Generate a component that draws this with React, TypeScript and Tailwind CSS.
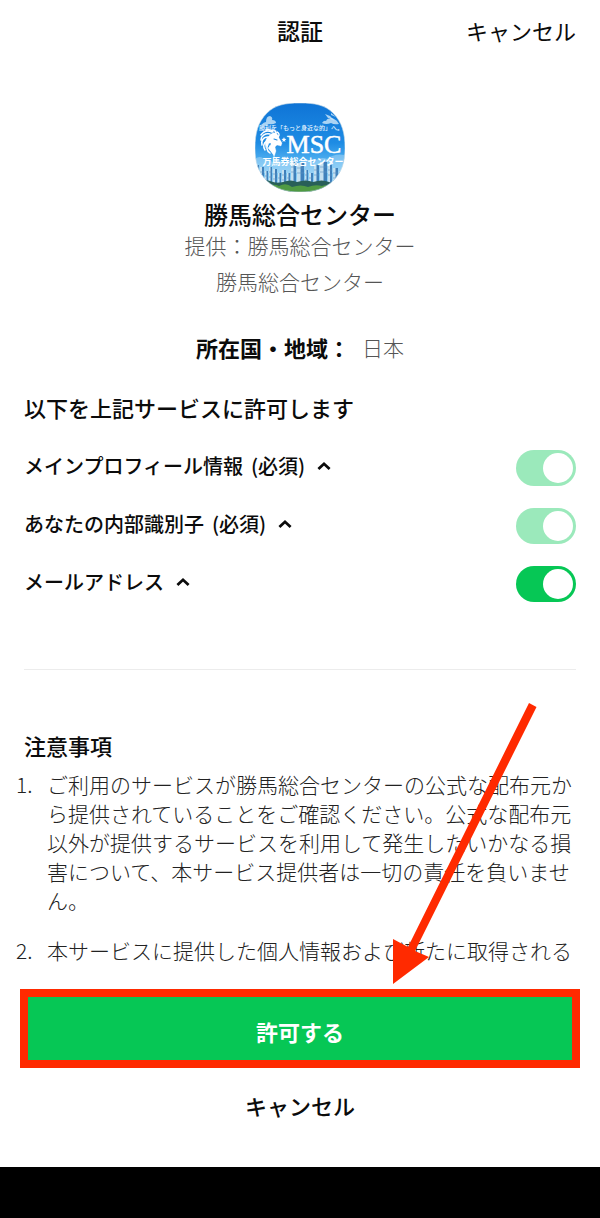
import { useState } from "react";

const logoShape =
  "M45 0C60 0 70 2 78 10C87 19 90 30 90 45C90 59 87 69 78 78C69 86 59 89 45 89C31 89 21 86 12 78C3 69 0 59 0 45C0 30 3 19 12 10C20 2 30 0 45 0Z";

const towers = [
  [1, 62, 3, 22], [5, 64, 4, 20], [10, 68, 3, 14], [14, 64, 3, 20], [18, 66, 4, 16], [23, 70, 3, 12],
  [27, 67, 4, 18], [32, 70, 3, 12], [36, 59, 5, 24], [42, 60, 7, 22], [50, 67, 3, 14], [54, 70, 4, 12],
  [59, 62, 5, 20], [65, 59, 7, 24], [73, 62, 4, 20], [78, 65, 5, 16], [84, 68, 4, 12],
];

function Logo() {
  return (
    <svg viewBox="0 0 90 89" className="h-[89px] w-[90px]" role="img" aria-label="MSC">
      <defs>
        <clipPath id="logo-clip">
          <path d={logoShape} />
        </clipPath>
        <linearGradient id="sky" x1="0" y1="0" x2="0" y2="1">
          <stop offset="0" stopColor="#0f74d6" />
          <stop offset="0.45" stopColor="#1e8ce4" />
          <stop offset="0.7" stopColor="#5bb8f2" />
          <stop offset="1" stopColor="#b5e0f2" />
        </linearGradient>
      </defs>
      <g clipPath="url(#logo-clip)">
        <rect width="90" height="89" fill="url(#sky)" />
        <g fill="#cfe9fa">
          <path d="M6 22q3-3 5-3q0-6 4-6q3 1 2 4q4 0 4 3q-4 2-7 1q-4 3-8 1z" opacity="0.8" />
          <path d="M67 20q2-3 4-2q1-3 4-2q1-2 4 0q3 1 5 5q-5 1-8-1q-5 2-9 0z" opacity="0.8" />
          <path d="M70 11l5 2l5 5l-7-3zM76 10l5 4l-5-2z" opacity="0.8" />
          <path d="M0 56q5-4 9 0q6-2 8 3q7-4 12 1q8-5 14 0q9-6 15-1q8-6 14-3q7-6 18-4v18H0z" opacity="0.4" />
        </g>
        {towers.map(([x, y, w, h]) => (
          <g key={x}>
            <rect x={x} y={y} width={w} height={h} fill="#3f80bb" />
            <rect x={x} y={y} width={w / 2} height={h} fill="#c4e0f0" />
            <path d={`M${x} ${y + 5}h${w}M${x} ${y + 10}h${w}`} stroke="#5a92c2" strokeWidth="0.6" />
          </g>
        ))}
        <path d="M0 78q8-3 15 0t13 1q8-3 14 0q9-3 16 0q9-3 16 0t16-1v15H0z" fill="#285f58" />
        <path d="M10 84q8-4 14-1q7-4 13 1q9-3 16 0q7-3 14-1q5-2 10 0l-8 7H18z" fill="#4f9a43" />
        <g fill="#ffffff" stroke="#ffffff" strokeLinecap="round" strokeLinejoin="round">
          <path d="M15 32c4-4 8-2 9 3l3 5-1 3-4-1-2 2 1 4-2 6c-1-5-4-6-6-9 2-2 3-3 3-5-3 0-4 2-5 5-2-6 0-10 4-13z" strokeWidth="0.3" />
          <path
            d="M17 29c-5-2-9 0-11 3m9-1c-5-1-9 2-9 6m7-3c-5 0-7 4-6 8m5-4c-4 2-4 6-2 9m3-6c-2 4-1 7 2 9m0-7c0 3 1 5 3 7M18 29c-2-2-5-3-7-2m10 4c0-3-2-4-4-4m6 7c2-2 1-4-1-5"
            fill="none"
            strokeWidth="1.5"
          />
          <path d="M19 36l3 1" stroke="#268de0" strokeWidth="1.1" />
          <path d="M29 34l.6 1.8 1.8.2-1.4 1.2.4 1.8-1.4-1-1.6 1 .5-1.8-1.4-1.2 1.8-.2z" stroke="none" />
        </g>
        <text x="46" y="27" textAnchor="middle" fill="#e4f4ff" fontSize="6" fontWeight="500" fontFamily="Noto Sans CJK JP, sans-serif">
          勝利を「もっと身近な的」へ。
        </text>
        <text x="59" y="50" textAnchor="middle" fill="#ffffff" stroke="#ffffff" strokeWidth="0.5" fontSize="26" fontFamily="Liberation Serif, serif">
          MSC
        </text>
        <text x="48" y="62" textAnchor="middle" fill="#ffffff" fontSize="9" fontWeight="700" fontFamily="Noto Sans CJK JP, sans-serif">
          万馬券総合センター
        </text>
      </g>
      <path d={logoShape} fill="none" stroke="#c9dbe6" strokeWidth="0.6" />
    </svg>
  );
}

type Permission = { id: string; name: string; required: boolean };

const permissions: Permission[] = [
  { id: "profile", name: "メインプロフィール情報", required: true },
  { id: "identifier", name: "あなたの内部識別子", required: true },
  { id: "mail", name: "メールアドレス", required: false },
];

const notes = [
  "ご利用のサービスが勝馬総合センターの公式な配布元から提供されていることをご確認ください。公式な配布元以外が提供するサービスを利用して発生したいかなる損害について、本サービス提供者は一切の責任を負いません。",
  "本サービスに提供した個人情報および新たに取得される",
];

function PermissionRow({ id, name, required }: Permission) {
  const [on, setOn] = useState(true);
  const [open, setOpen] = useState(true);
  return (
    <li className="flex h-[58px] items-center justify-between">
      <div className="flex items-center gap-3 pb-1">
        <label htmlFor={id} className="flex gap-2 text-[20px] leading-8 font-medium">
          <span>{name}</span>
          {required && <span>(必須)</span>}
        </label>
        <button type="button" aria-label={`${name}の詳細`} aria-expanded={open} onClick={() => setOpen(!open)}>
          <svg viewBox="0 0 14 10" className="h-2.5 w-3.5" fill="none" stroke="currentColor" strokeWidth="2.8">
            <path d="M1.4 8L7 2.8L12.6 8" />
          </svg>
        </button>
      </div>
      <input
        id={id}
        type="checkbox"
        role="switch"
        checked={on}
        disabled={required}
        onChange={() => setOn(!on)}
        className="flex h-9 w-[60px] shrink-0 appearance-none items-center rounded-full bg-gray-300 p-[3px] before:size-[30px] before:rounded-full before:bg-white checked:justify-end checked:bg-[#06c755] disabled:checked:bg-[#9be9bb]"
      />
    </li>
  );
}

export default function App() {
  return (
    <div className="flex min-h-screen flex-col bg-white font-['Noto_Sans_CJK_JP',sans-serif] text-[#0b0b0b]">
      <header className="grid h-[60px] grid-cols-3 items-center px-6">
        <h1 className="col-start-2 text-center text-[23px] font-medium">認証</h1>
        <button type="button" className="justify-self-end text-[22px]">
          キャンセル
        </button>
      </header>

      <main className="flex grow flex-col">
        <section className="flex flex-col items-center pt-[43px] text-center">
          <Logo />
          <h2 className="mt-[7px] text-[24px] leading-[30px] font-medium">勝馬総合センター</h2>
          <p className="text-[21px] leading-8 font-light text-[#555555]">提供：勝馬総合センター</p>
          <p className="mt-1 text-[21px] leading-8 font-light text-[#555555]">勝馬総合センター</p>
          <dl className="mt-[34px] flex items-center gap-3 leading-8">
            <dt className="text-[22px] font-bold">所在国・地域：</dt>
            <dd className="text-[21px] font-light text-[#555555]">日本</dd>
          </dl>
        </section>

        <section className="mx-6 border-b border-[#ececec] pt-7 pb-14">
          <h2 className="text-[22px] leading-8 font-medium">以下を上記サービスに許可します</h2>
          <ul className="mt-4">
            {permissions.map((permission) => (
              <PermissionRow key={permission.id} {...permission} />
            ))}
          </ul>
        </section>

        <section className="pt-[59px]">
          <h2 className="px-6 text-[22px] leading-8 font-medium">注意事項</h2>
          <ol className="mt-[9px] space-y-[21px] pr-6 pl-4 text-[21px] leading-[29px] font-light text-[#222222]">
            {notes.map((note, index) => (
              <li key={note} className="flex">
                <span className="w-[31px] shrink-0">{index + 1}.</span>
                <p>{note}</p>
              </li>
            ))}
          </ol>
        </section>

        <div className="mt-6 px-5">
          <div className="relative">
            <button
              type="button"
              className="h-[79px] w-full border-8 border-[#ff2a00] bg-[#06c755] pt-1.5 text-[22px] font-bold text-white"
            >
              許可する
            </button>
            <svg
              viewBox="0 0 146 282"
              className="pointer-events-none absolute right-[42px] bottom-full mb-[5px] h-[282px] w-[146px]"
              fill="#ff2a00"
              aria-hidden="true"
            >
              <path d="M137 1L144.500 5L23 249L37 255L1 282V237L16 245Z" />
            </svg>
          </div>
          <button type="button" className="mt-[21px] mb-[46px] block h-8 w-full text-[22px] leading-8 font-medium">
            キャンセル
          </button>
        </div>
      </main>

      <footer className="h-[51px] bg-black" />
    </div>
  );
}
